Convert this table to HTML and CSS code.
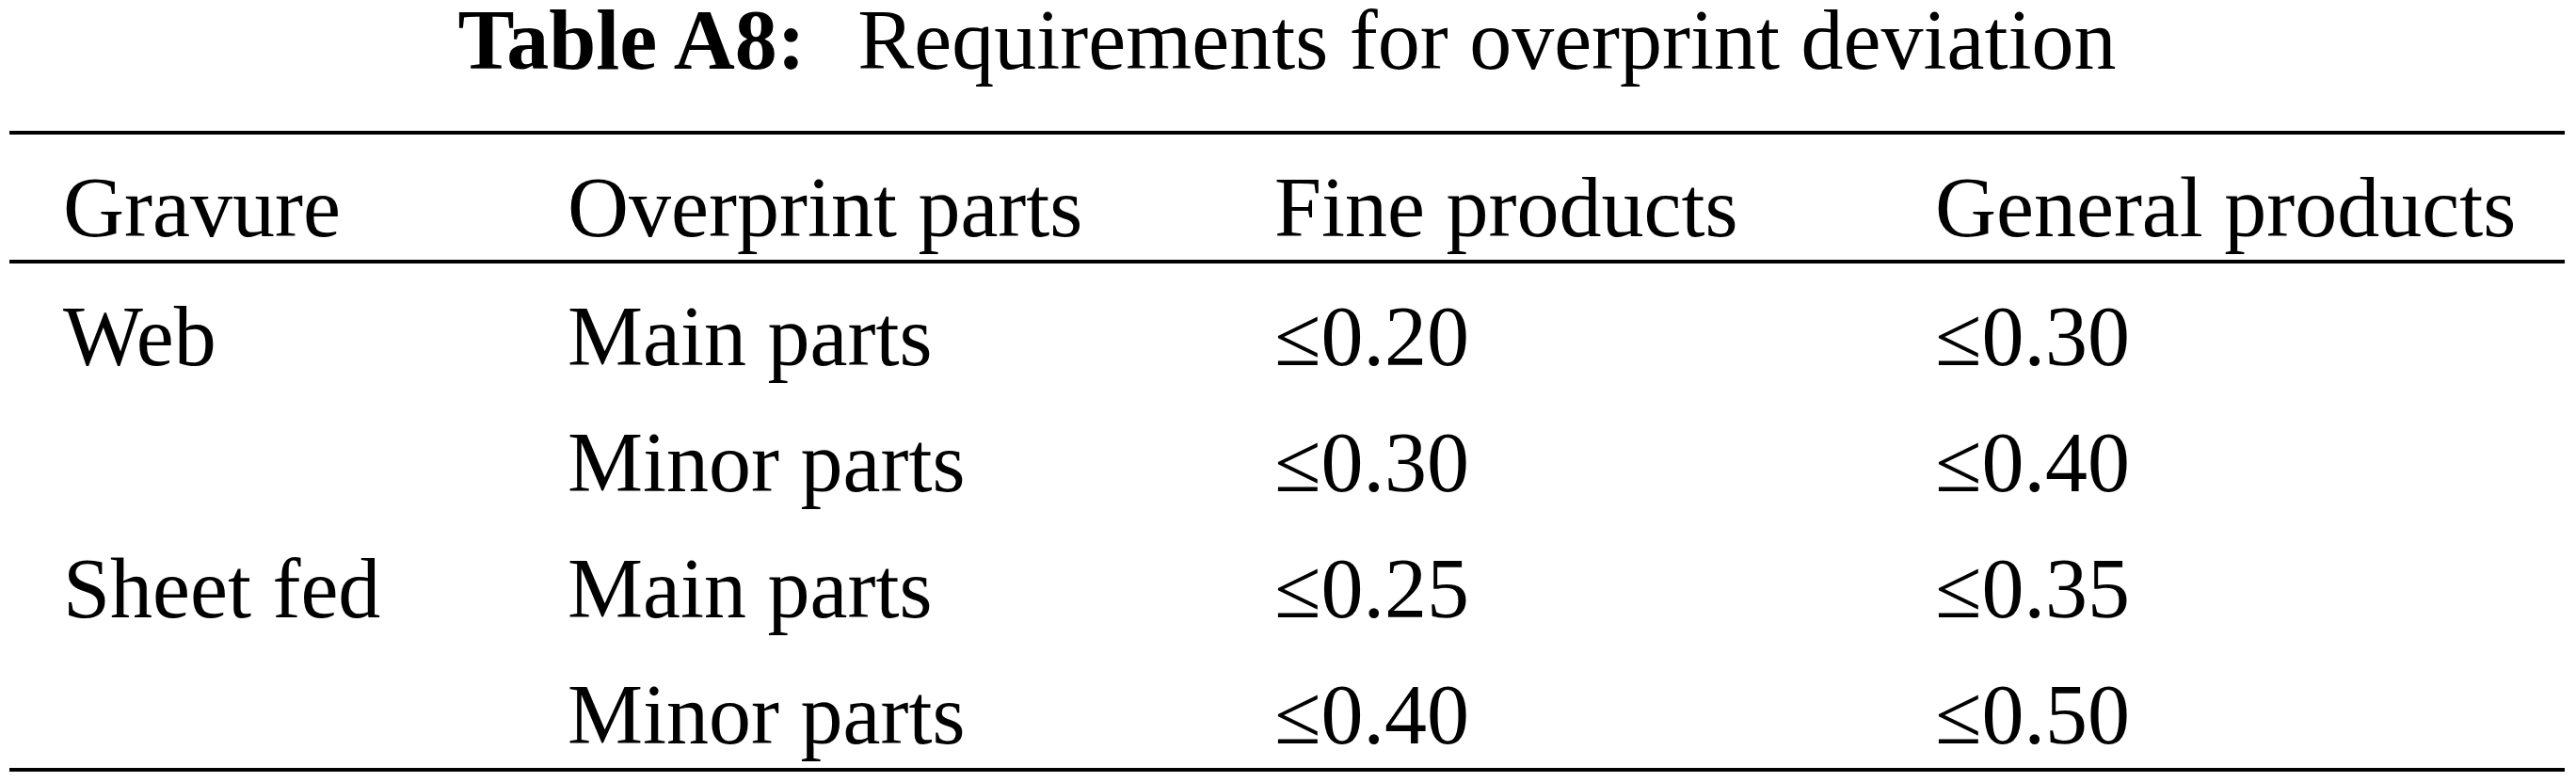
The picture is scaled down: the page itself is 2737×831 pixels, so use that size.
FILE: index.html
```html
<!DOCTYPE html>
<html lang="en">
<head>
  <meta charset="UTF-8">
  <meta name="viewport" content="width=device-width, initial-scale=1.0">
  <link rel="stylesheet" href="styles.css">
  <title>Table A8</title>
</head>
<body>

  <div class="page">
    <div class="caption"><span class="label">Table A8:</span> Requirements for overprint deviation</div>

    <div class="table">
      <div class="row head">
        <div>Gravure</div>
        <div>Overprint parts</div>
        <div>Fine products</div>
        <div>General products</div>
      </div>

      <div class="body">
        <div class="row">
          <div>Web</div>
          <div>Main parts</div>
          <div>&le;0.20</div>
          <div>&le;0.30</div>
        </div>
        <div class="row">
          <div></div>
          <div>Minor parts</div>
          <div>&le;0.30</div>
          <div>&le;0.40</div>
        </div>
        <div class="row">
          <div>Sheet fed</div>
          <div>Main parts</div>
          <div>&le;0.25</div>
          <div>&le;0.35</div>
        </div>
        <div class="row">
          <div></div>
          <div>Minor parts</div>
          <div>&le;0.40</div>
          <div>&le;0.50</div>
        </div>
      </div>
    </div>
  </div>

</body>
</html>
```

FILE: styles.css
```css
body {
  font-family: 'Liberation Serif', 'Times New Roman', serif;
  background: #fff;
  color: #000;
  margin: 0;
}

.page {
  padding: 0 12px 0 10px;
}

.caption {
  font-size: 90px;
  line-height: 86px;
  text-align: center;
  white-space: nowrap;
}

.caption .label {
  font-weight: bold;
  margin-right: 33px;
}

.table {
  margin-top: 53px;
  border-top: 4px solid #000;
  border-bottom: 4px solid #000;
  font-size: 90px;
}

.row {
  display: grid;
  grid-template-columns: 536px 751px 702px auto;
  padding-left: 57px;
  line-height: 110px;
  white-space: nowrap;
}

.head {
  padding-top: 23px;
  border-bottom: 4px solid #000;
}

.body {
  display: flex;
  flex-direction: column;
  gap: 24px;
  padding: 23px 0 1px;
}
```
